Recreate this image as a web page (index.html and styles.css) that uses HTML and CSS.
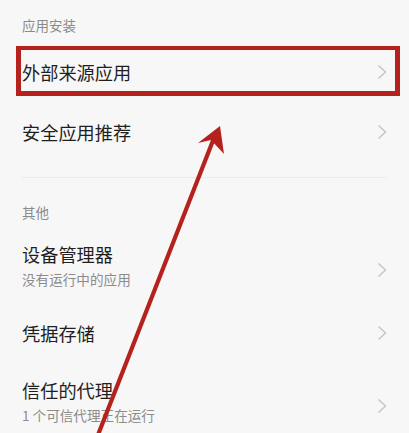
FILE: index.html
```html
<!DOCTYPE html>
<html lang="zh-CN">
<head>
<meta charset="utf-8">
<link rel="stylesheet" href="styles.css">
</head>
<body>
<div class="page">
  <div class="section-title first">应用安装</div>
  <div class="row single">
    <span class="title">外部来源应用</span>
    <svg class="chev" viewBox="0 0 10 16"><path d="M1.5 1.5 L8.5 8 L1.5 14.5"/></svg>
    <div class="highlight"></div>
  </div>
  <div class="row single">
    <span class="title">安全应用推荐</span>
    <svg class="chev" viewBox="0 0 10 16"><path d="M1.5 1.5 L8.5 8 L1.5 14.5"/></svg>
  </div>
  <div class="divider"></div>
  <div class="section-title second">其他</div>
  <div class="row double">
    <div class="texts">
      <span class="title">设备管理器</span>
      <span class="sub">没有运行中的应用</span>
    </div>
    <svg class="chev" viewBox="0 0 10 16"><path d="M1.5 1.5 L8.5 8 L1.5 14.5"/></svg>
  </div>
  <div class="row single tall">
    <span class="title">凭据存储</span>
    <svg class="chev" viewBox="0 0 10 16"><path d="M1.5 1.5 L8.5 8 L1.5 14.5"/></svg>
  </div>
  <div class="row double last">
    <div class="texts">
      <span class="title">信任的代理</span>
      <span class="sub">1 个可信代理正在运行</span>
    </div>
    <svg class="chev" viewBox="0 0 10 16"><path d="M1.5 1.5 L8.5 8 L1.5 14.5"/></svg>
  </div>
  <svg class="arrow" viewBox="0 0 409 433" width="409" height="433">
    <line x1="96" y1="440" x2="214" y2="138"/>
    <polygon points="220,126 198,143 211,140 224,154"/>
  </svg>
</div>
</body>
</html>
```

FILE: styles.css
```css
html, body {
  margin: 0;
  padding: 0;
  background: #f7f7f7;
}
body {
  font-family: "Noto Sans CJK SC", "Noto Sans", sans-serif;
  color: #1f1f1f;
  overflow: hidden;
  height: 433px;
}
.page {
  position: relative;
  width: 409px;
  height: 433px;
  overflow: hidden;
}
.section-title {
  font-size: 13.5px;
  line-height: 20px;
  color: #8a8a8a;
  padding-left: 22px;
}
.section-title.first {
  padding-top: 15px;
  padding-bottom: 7px;
}
.section-title.second {
  padding-top: 24px;
  padding-bottom: 10px;
}
.row {
  position: relative;
  display: flex;
  align-items: center;
  justify-content: space-between;
  padding: 0 22px 0 22px;
}
.row.single {
  height: 60px;
}
.row.single.tall {
  height: 70px;
}
.row.double {
  padding-top: 10px;
  padding-bottom: 9px;
}
.row.double.last {
  padding-top: 10px;
}
.texts {
  display: flex;
  flex-direction: column;
  gap: 3px;
}
.title {
  font-size: 18.2px;
  line-height: 24px;
  color: #1f1f1f;
}
.sub {
  font-size: 13.6px;
  line-height: 20px;
  color: #8c8c8c;
}
.chev {
  width: 10px;
  height: 16px;
  margin-right: 0px;
  flex: none;
}
.chev path {
  fill: none;
  stroke: #c4c4c4;
  stroke-width: 1.4;
}
.row.double .chev {
  margin-top: 8px;
}
.divider {
  height: 1px;
  background: #ebebeb;
  margin: 15px 22px 0 22px;
}
.highlight {
  position: absolute;
  left: 16px;
  top: 4px;
  width: 384px;
  height: 50px;
  box-sizing: border-box;
  border: 5px solid #b5221d;
  border-top-width: 4.5px;
}
.arrow {
  position: absolute;
  left: 0;
  top: 0;
  pointer-events: none;
}
.arrow line {
  stroke: #b5221d;
  stroke-width: 4.2;
}
.arrow polygon {
  fill: #b5221d;
}
```
